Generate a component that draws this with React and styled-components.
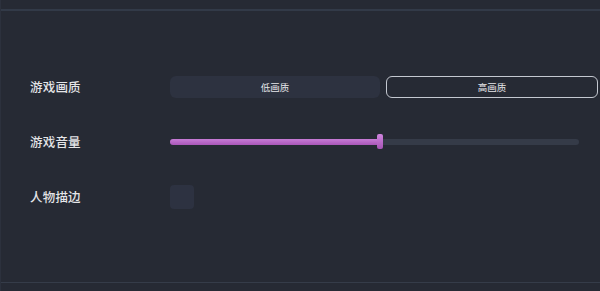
import React from "react";
import styled, { createGlobalStyle } from "styled-components";

const Global = createGlobalStyle`
  html, body {
    margin: 0;
    padding: 0;
    background: #262a34;
  }
  body {
    font-family: "Noto Sans CJK SC", "Noto Sans", sans-serif;
  }
`;

function App() {
  return (
    <>
      <Global />
      <Frame>
        <Panel>
          <Row>
            <Label>游戏画质</Label>
            <Options>
              <Option>低画质</Option>
              <Option active>高画质</Option>
            </Options>
          </Row>
          <Row>
            <Label>游戏音量</Label>
            <Slider>
              <Fill style={{ width: "51.5%" }} />
              <Thumb />
            </Slider>
          </Row>
          <Row>
            <Label>人物描边</Label>
            <Check />
          </Row>
        </Panel>
      </Frame>
    </>
  );
}

export default App;

const Frame = styled.div`
  height: 291px;
  box-sizing: border-box;
  padding-top: 9px;
  border-left: 1px solid #2c313d;
  overflow: hidden;
`;

const Panel = styled.div`
  height: 274px;
  box-sizing: border-box;
  border-top: 2px solid #323a48;
  border-bottom: 1px solid #353c49;
  padding-top: 48px;
  display: flex;
  flex-direction: column;
`;

const Row = styled.div`
  display: flex;
  align-items: center;
  height: 55px;
  padding-left: 29px;
`;

const Label = styled.div`
  width: 140px;
  flex-shrink: 0;
  color: #e4e5e8;
  font-size: 12.5px;
  font-weight: 500;
  letter-spacing: 0.2px;
`;

const Options = styled.div`
  display: flex;
  gap: 6px;
  width: 428px;
`;

const Option = styled.div`
  flex: 1;
  height: 22px;
  box-sizing: border-box;
  border-radius: 6px;
  display: flex;
  align-items: center;
  justify-content: center;
  font-size: 9.5px;
  color: #e6e7ea;
  background: ${(p) => (p.active ? "#262a34" : "#2d3240")};
  border: ${(p) => (p.active ? "1.5px solid #c4c8d0" : "none")};
`;

const Slider = styled.div`
  position: relative;
  width: 409px;
  height: 6px;
  border-radius: 3px;
  background: #353b48;
`;

const Fill = styled.div`
  height: 100%;
  border-radius: 3px;
  background: linear-gradient(#c77bd6, #a957b8);
`;

const Thumb = styled.div`
  position: absolute;
  left: 207px;
  top: -5px;
  width: 6px;
  height: 15px;
  border-radius: 2px;
  background: linear-gradient(#cf84de, #a654b5);
`;

const Check = styled.div`
  width: 24px;
  height: 24px;
  border-radius: 4px;
  background: #2d3241;
`;
